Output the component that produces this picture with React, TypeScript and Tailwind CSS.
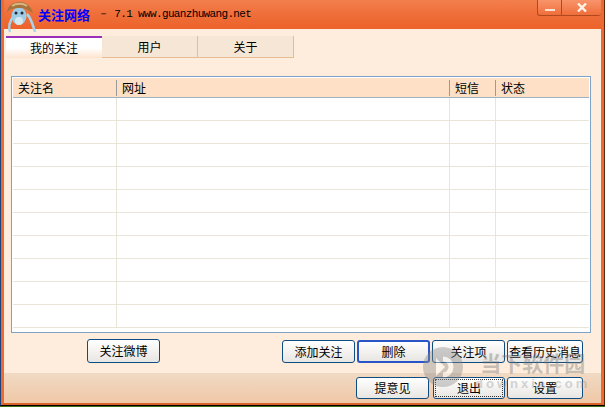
import React from 'react'

const cjk = '[font-family:"Noto_Sans_CJK_SC","Liberation_Sans",sans-serif]'

function Logo() {
  return (
    <svg width="40" height="34" viewBox="0 0 40 34" className="absolute left-0 top-0">
      {/* legs */}
      <path d="M13 17 C10 21 8 26 10 32" fill="none" stroke="#a9d3ea" strokeWidth="2.5" />
      <path d="M27 14 C31 18 33 25 35 32" fill="none" stroke="#a9d3ea" strokeWidth="2.5" />
      {/* head */}
      <ellipse cx="19" cy="16" rx="7.5" ry="9" fill="#9fcde6" />
      <ellipse cx="19" cy="21" rx="4" ry="4" fill="#d5e9f3" />
      {/* hat */}
      <path d="M7 12 C8 5 14 2 20 2 C26 2 31 6 33 13 C28 10 25 8 20 8 C14 8 10 9 7 12 Z" fill="#a5743c" />
      <path d="M12 6 C16 3 23 3 27 6" fill="none" stroke="#d9b583" strokeWidth="2" />
      {/* eyes */}
      <circle cx="16" cy="13" r="1.5" fill="#1c2c3a" />
      <circle cx="22" cy="13" r="1.5" fill="#1c2c3a" />
    </svg>
  )
}

function Btn({ label, width, focus, active }: { label: string; width: string; focus?: boolean; active?: boolean }) {
  return (
    <button
      className={`${width} block h-full rounded-[3px] bg-gradient-to-b from-white to-[#e8e6e2] text-[12px] leading-none text-black ${active ? 'border-2 border-[#2a55c8]' : 'border border-[#0f4c81]'} ${focus ? 'outline-1 outline-dotted -outline-offset-3 outline-[#333]' : ''}`}
    >
      {label}
    </button>
  )
}

function Watermark() {
  return (
    <div className="absolute left-[423px] top-[347px] flex items-start gap-[12px] opacity-40 pointer-events-none">
      <svg width="40" height="40" viewBox="0 0 40 40">
        <circle cx="20" cy="20" r="20" fill="#8a8a8a" />
        <path d="M13 11 L22 20 L13 29 Z" fill="#fff" />
        <path d="M20 12 A8 8 0 0 1 20 28" fill="none" stroke="#fff" strokeWidth="5" />
      </svg>
      <div className="flex flex-col items-center pt-[3px]">
        <span className="text-[21px] leading-[24px] font-bold text-[#777]">当下软件园</span>
        <span className="mt-[2px] [font-family:'Liberation_Sans',sans-serif] text-[13px] leading-[15px] font-bold tracking-[3px] text-[#999]">downxia.com</span>
      </div>
    </div>
  )
}

const rows = Array.from({ length: 10 })

export default function App() {
  return (
    <div className={`relative w-[605px] h-[407px] overflow-hidden bg-[#3f6f16] pb-px ${cjk}`}>
      <div className="h-full border-l border-r border-b border-l-[#1d3f7a] border-r-[#5a2a10] border-b-black">
        <div className="flex h-full flex-col border-x-[3px] border-b-[2px] border-x-[#ec6a33] border-b-[#d8622c]">
          {/* title bar */}
          <div className="flex h-[29px] shrink-0 items-center justify-between bg-gradient-to-b from-[#f37f4c] via-[#ef6e39] to-[#ec6229]">
            <div className="flex items-center pl-[34px] pb-[1px]">
              <span className="text-[13px] leading-none font-bold text-[#0000ff]">关注网络</span>
              <span className="ml-[8px] [font-family:'Liberation_Mono',monospace] text-[11px] leading-none tracking-[-0.65px] text-black whitespace-pre">－ 7.1 www.guanzhuwang.net</span>
            </div>
            <div className="flex h-[16px] self-start">
              <div className="flex w-[24px] items-center justify-center rounded-bl-[3px] border-l border-b border-[#b04a1e] bg-gradient-to-b from-[#f8946a] to-[#ef6e39]">
                <div className="mt-[5px] h-[2px] w-[10px] bg-[#fbe3d3]" />
              </div>
              <div className="flex w-[40px] items-center justify-center rounded-br-[3px] border-l border-b border-[#b04a1e] bg-gradient-to-b from-[#f8946a] to-[#ef6e39]">
                <svg width="10" height="9" viewBox="0 0 10 9">
                  <path d="M1 0.5 L9 8.5 M9 0.5 L1 8.5" stroke="#fff2e8" strokeWidth="2.4" />
                </svg>
              </div>
            </div>
          </div>

          {/* body */}
          <div className="flex min-h-0 flex-1 flex-col bg-[#feeddd]">
            <div className="flex px-[2px] pt-[7px] text-[12px] text-black">
              <div className="flex h-[22px] w-[96px] items-center justify-center border-t-2 border-[#9a2fb8] bg-gradient-to-b from-white via-white to-[#fde3ce]">我的关注</div>
              <div className="flex h-[22px] w-[96px] items-center justify-center border-r border-b border-[#e8bc8e] bg-[#f6e6d5]">用户</div>
              <div className="flex h-[22px] w-[96px] items-center justify-center border-r border-b border-[#e8bc8e] bg-[#f6e6d5]">关于</div>
            </div>

            {/* list */}
            <div className="mx-[7px] mt-[18px] h-[257px] w-[580px] border border-[#7ea3c6] bg-white px-px pt-px text-[12px] text-black">
              <div className="flex h-[20px] items-center border-b border-b-[#9fb0c0] bg-[#fde0c5]">
                <div className="h-[16px] w-[104px] border-r border-[#9a9a9a] pl-[5px] leading-[16px]">关注名</div>
                <div className="h-[16px] w-[333px] border-r border-[#9a9a9a] pl-[5px] leading-[16px]">网址</div>
                <div className="h-[16px] w-[46px] border-r border-[#9a9a9a] pl-[5px] leading-[16px]">短信</div>
                <div className="h-[16px] flex-1 pl-[5px] leading-[16px]">状态</div>
              </div>
              {rows.map((_, i) => (
                <div key={i} className="flex h-[23px] border-b border-[#e9e5d8]">
                  <div className="w-[104px] border-r border-[#e9e5d8]" />
                  <div className="w-[333px] border-r border-[#e9e5d8]" />
                  <div className="w-[46px] border-r border-[#e9e5d8]" />
                  <div className="flex-1" />
                </div>
              ))}
            </div>

            {/* action buttons */}
            <div className="flex h-[40px] shrink-0 items-start pt-[6px]">
              <div className="ml-[83px] h-[24px]">
                <Btn label="关注微博" width="w-[73px]" />
              </div>
              <div className="ml-[122px] mt-[1px] flex h-[23px] gap-[2px]">
                <Btn label="添加关注" width="w-[73px]" />
                <Btn label="删除" width="w-[73px]" active />
                <Btn label="关注项" width="w-[73px]" />
                <Btn label="查看历史消息" width="w-[76px]" />
              </div>
            </div>

            {/* bottom bar */}
            <div className="min-h-0 flex-1 bg-gradient-to-b from-[#f0dac4] to-[#f0c8a6] pt-[4px]">
              <div className="ml-[352px] flex h-[22px]">
                <Btn label="提意见" width="w-[73px]" />
                <div className="ml-[4px] mr-[2px] h-full">
                  <Btn label="退出" width="w-[72px]" focus />
                </div>
                <Btn label="设置" width="w-[76px]" />
              </div>
            </div>
          </div>
        </div>
      </div>
      <Logo />
      <Watermark />
    </div>
  )
}
